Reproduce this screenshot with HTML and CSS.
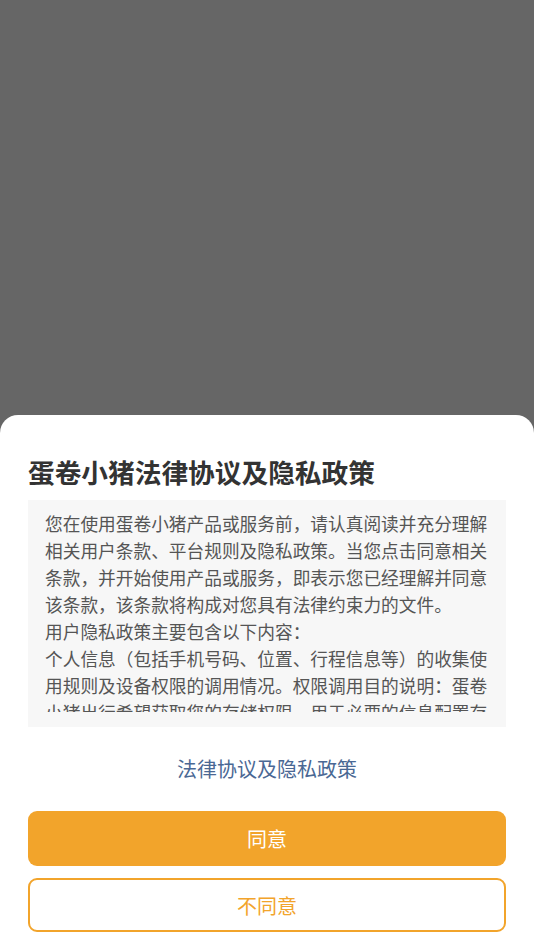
FILE: index.html
```html
<!DOCTYPE html>
<html lang="zh-CN">
<head>
<meta charset="utf-8">
<title>蛋卷小猪法律协议及隐私政策</title>
<link rel="stylesheet" href="styles.css">
</head>
<body>
<div class="overlay">
  <div class="sheet">
    <h1 class="title">蛋卷小猪法律协议及隐私政策</h1>
    <div class="content">
      <div class="scroll">
        <p>您在使用蛋卷小猪产品或服务前，请认真阅读并充分理解相关用户条款、平台规则及隐私政策。当您点击同意相关条款，并开始使用产品或服务，即表示您已经理解并同意该条款，该条款将构成对您具有法律约束力的文件。</p>
        <p>用户隐私政策主要包含以下内容：</p>
        <p>个人信息（包括手机号码、位置、行程信息等）的收集使用规则及设备权限的调用情况。权限调用目的说明：蛋卷小猪出行希望获取您的存储权限，用于必要的信息配置存储。</p>
      </div>
    </div>
    <a class="link" href="#">法律协议及隐私政策</a>
    <button class="btn btn-agree">同意</button>
    <button class="btn btn-disagree">不同意</button>
  </div>
</div>
</body>
</html>
```

FILE: styles.css
```css
html, body {
  margin: 0;
  padding: 0;
  height: 100%;
}
body {
  font-family: "Noto Sans CJK SC", "Noto Sans", sans-serif;
  background: #666666;
}
.overlay {
  height: 948px;
  display: flex;
  flex-direction: column;
  justify-content: flex-end;
  background: #666666;
}
.sheet {
  background: #ffffff;
  border-radius: 18px 18px 0 0;
  padding: 39px 28px 16px;
  display: flex;
  flex-direction: column;
}
.title {
  margin: 0;
  font-size: 26.7px;
  line-height: 36px;
  font-weight: 700;
  color: #333333;
}
.content {
  margin-top: 10px;
  height: 227px;
  box-sizing: border-box;
  background: #f7f7f7;
  padding: 10px 15px 15px 17px;
  color: #555555;
  font-size: 17.7px;
  line-height: 27px;
}
.scroll {
  height: 202px;
  overflow: hidden;
}
.scroll p {
  margin: 0;
}
.link {
  margin-top: 28px;
  align-self: center;
  font-size: 20px;
  line-height: 28px;
  color: #4a6894;
  text-decoration: none;
}
.btn {
  font-family: inherit;
  font-size: 20px;
  border-radius: 9px;
  cursor: pointer;
  width: 100%;
  box-sizing: border-box;
}
.btn-agree {
  margin-top: 28px;
  height: 55px;
  background: #f2a42b;
  color: #ffffff;
  border: none;
}
.btn-disagree {
  margin-top: 12px;
  height: 54px;
  background: #ffffff;
  color: #f2a42b;
  border: 2px solid #f2a42b;
}
```
